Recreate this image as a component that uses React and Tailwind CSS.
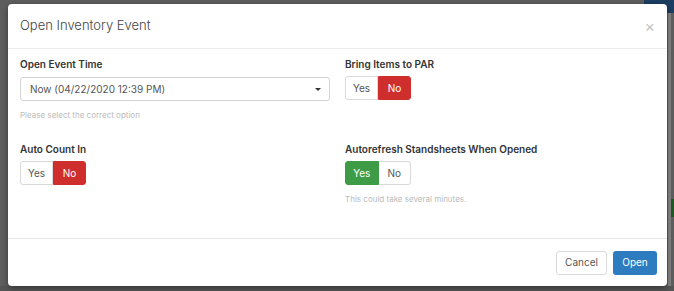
import { useState } from 'react';

const FONT = { fontFamily: 'Inter, "Liberation Sans", sans-serif' };

function Toggle({ value, onChange }) {
  const on = value === 'yes';
  return (
    <div className="flex h-[24px] w-[66px] text-[10px]">
      <button
        onClick={() => onChange('yes')}
        className={`flex-1 rounded-l-[3px] border ${
          on ? 'bg-[#3e9c47] border-[#3e9c47] text-white' : 'bg-white border-[#d9d9d9] text-[#555]'
        }`}
      >
        Yes
      </button>
      <button
        onClick={() => onChange('no')}
        className={`flex-1 rounded-r-[3px] border ${
          !on ? 'bg-[#cf2f2c] border-[#cf2f2c] text-white' : 'bg-white border-[#d9d9d9] border-l-0 text-[#555]'
        }`}
      >
        No
      </button>
    </div>
  );
}

export default function App() {
  const [par, setPar] = useState('no');
  const [countIn, setCountIn] = useState('no');
  const [refresh, setRefresh] = useState('yes');

  return (
    <div className="relative h-[291px] w-[674px] overflow-hidden bg-[#5e5e5e]" style={FONT}>
      {/* page content behind the backdrop */}
      <div className="absolute right-0 top-0 h-[13px] w-[30px] bg-[#1d3d63]" />
      <div className="absolute right-[3px] top-[13px] h-[280px] w-[3px] bg-[#858585]" />
      <div className="absolute right-0 top-[199px] h-[18px] w-[3px] bg-[#1f5a24]" />
      <div className="absolute bottom-0 left-0 h-[5px] w-full bg-[#555]" />

      <div className="absolute left-[8px] top-[4px] flex h-[282px] w-[659px] flex-col rounded-[4px] bg-white shadow-[0_2px_6px_rgba(0,0,0,0.4)]">
        {/* header */}
        <div className="flex h-[45px] items-center justify-between border-b border-[#ececec] px-[12px]">
          <h2 className="text-[13px] font-light text-[#444]">Open Inventory Event</h2>
          <button className="text-[16px] leading-none text-[#c4c4c4]">×</button>
        </div>

        {/* body */}
        <div className="grid h-[190px] grid-cols-2 gap-x-[15px] border-b border-[#e6e6e6] px-[12px] pt-[8px]">
          <div>
            <div className="text-[10px] leading-[15px] font-semibold text-[#333]">Open Event Time</div>
            <div className="mt-[5px] flex h-[24px] items-center justify-between rounded-[3px] border border-[#d4d4d4] pl-[9px] pr-[8px] text-[10px] text-[#555]">
              <span>Now (04/22/2020 12:39 PM)</span>
              <span className="h-0 w-0 border-x-[3px] border-t-[3px] border-x-transparent border-t-[#333]" />
            </div>
            <div className="mt-[8px] text-[8px] leading-[12px] text-[#bbb]">Please select the correct option</div>

            <div className="mt-[21px] text-[10px] leading-[15px] font-semibold text-[#333]">Auto Count In</div>
            <div className="mt-[4px]">
              <Toggle value={countIn} onChange={setCountIn} />
            </div>
          </div>

          <div>
            <div className="text-[10px] leading-[15px] font-semibold text-[#333]">Bring Items to PAR</div>
            <div className="mt-[4px]">
              <Toggle value={par} onChange={setPar} />
            </div>

            <div className="mt-[42px] text-[10px] leading-[15px] font-semibold text-[#333]">Autorefresh Standsheets When Opened</div>
            <div className="mt-[4px]">
              <Toggle value={refresh} onChange={setRefresh} />
            </div>
            <div className="mt-[8px] text-[8px] leading-[12px] text-[#bbb]">This could take several minutes.</div>
          </div>
        </div>

        {/* footer */}
        <div className="flex flex-1 items-center justify-end gap-[6px] pr-[10px]">
          <button className="h-[24px] w-[51px] rounded-[3px] border border-[#d9d9d9] bg-white text-[10px] text-[#555]">
            Cancel
          </button>
          <button className="h-[24px] w-[44px] rounded-[3px] bg-[#2e7cc0] text-[10px] text-white">
            Open
          </button>
        </div>
      </div>
    </div>
  );
}
